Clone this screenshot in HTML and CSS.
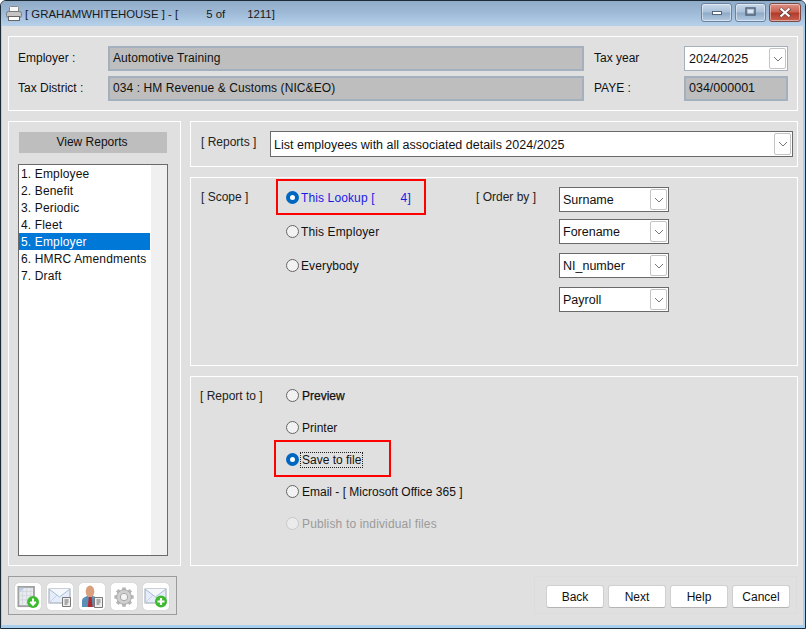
FILE: index.html
```html
<!DOCTYPE html>
<html lang="en">
<head>
<meta charset="utf-8">
<title>GRAHAMWHITEHOUSE</title>
<link rel="stylesheet" href="styles.css">
</head>
<body>
<div class="window">
  <header class="titlebar">
    <svg class="app-icon" width="16" height="16" viewBox="0 0 16 16"><rect x="3.500" y="0.500" width="9" height="6" rx="1" fill="#fafafa" stroke="#8a8a8a"/><rect x="0.500" y="5.500" width="15" height="6" rx="2" fill="#c4c4c4" stroke="#777"/><rect x="2.500" y="10.500" width="11" height="4" fill="#fff" stroke="#666"/></svg>
    <span class="title-text">[ GRAHAMWHITEHOUSE ] - [</span>
    <span class="title-count">5 of</span>
    <span class="title-total">1211]</span>
    <div class="caption">
      <div class="cap-btn"><svg width="12" height="7" viewBox="0 0 12 7"><rect x="1.500" y="2.500" width="9" height="3" fill="#fff" stroke="#56647a"/></svg></div>
      <div class="cap-btn"><svg width="11" height="10" viewBox="0 0 11 10"><rect x="1" y="1" width="9" height="7" fill="none" stroke="#56647a" stroke-width="1.500"/><rect x="3" y="3" width="5" height="3" fill="#dfe8f2"/></svg></div>
      <div class="cap-btn cap-close"><svg width="14" height="11" viewBox="0 0 14 11"><path d="M2 1.500 L12 9.500 M12 1.500 L2 9.500" stroke="#5a3a3a" stroke-width="3.400" fill="none"/><path d="M2.500 1.500 L11.500 9.500 M11.500 1.500 L2.500 9.500" stroke="#fff" stroke-width="2.200" fill="none"/></svg></div>
    </div>
  </header>

  <div class="client">
    <section class="panel top-panel">
      <span class="label">Employer :</span>
      <div class="field">Automotive Training</div>
      <span class="label label-right">Tax year</span>
      <div class="combo combo-soft"><span>2024/2025</span><span class="drop"><svg width="10" height="6" viewBox="0 0 10 6"><path d="M1 1 L5 5 L9 1" fill="none" stroke="#777"/></svg></span></div>
      <span class="label">Tax District :</span>
      <div class="field">034 : HM Revenue &amp; Customs (NIC&amp;EO)</div>
      <span class="label label-right">PAYE :</span>
      <div class="field field-code">034/000001</div>
    </section>

    <div class="main">
      <aside class="panel side">
        <div class="side-head">View Reports</div>
        <div class="listbox">
          <ul class="list">
            <li>1. Employee</li>
            <li>2. Benefit</li>
            <li>3. Periodic</li>
            <li>4. Fleet</li>
            <li class="selected">5. Employer</li>
            <li>6. HMRC Amendments</li>
            <li>7. Draft</li>
          </ul>
          <div class="scrolltrack"></div>
        </div>
      </aside>

      <div class="right">
        <section class="panel reports">
          <span class="group-label">[ Reports ]</span>
          <div class="combo combo-wide"><span>List employees with all associated details 2024/2025</span><span class="drop"><svg width="10" height="6" viewBox="0 0 10 6"><path d="M1 1 L5 5 L9 1" fill="none" stroke="#777"/></svg></span></div>
        </section>

        <section class="panel scope">
          <span class="group-label scope-label">[ Scope ]</span>
          <div class="scope-radios">
            <div class="radio-row highlight highlight-scope"><span class="radio on"></span><span class="blue">This Lookup [</span><span class="blue lookup-count">4]</span></div>
            <div class="radio-row"><span class="radio"></span>This Employer</div>
            <div class="radio-row"><span class="radio"></span>Everybody</div>
          </div>
          <span class="group-label order-label">[ Order by ]</span>
          <div class="order-list">
            <div class="combo combo-order"><span>Surname</span><span class="drop"><svg width="10" height="6" viewBox="0 0 10 6"><path d="M1 1 L5 5 L9 1" fill="none" stroke="#777"/></svg></span></div>
            <div class="combo combo-order"><span>Forename</span><span class="drop"><svg width="10" height="6" viewBox="0 0 10 6"><path d="M1 1 L5 5 L9 1" fill="none" stroke="#777"/></svg></span></div>
            <div class="combo combo-order"><span>NI_number</span><span class="drop"><svg width="10" height="6" viewBox="0 0 10 6"><path d="M1 1 L5 5 L9 1" fill="none" stroke="#777"/></svg></span></div>
            <div class="combo combo-order"><span>Payroll</span><span class="drop"><svg width="10" height="6" viewBox="0 0 10 6"><path d="M1 1 L5 5 L9 1" fill="none" stroke="#777"/></svg></span></div>
          </div>
        </section>

        <section class="panel report-to">
          <span class="group-label report-label">[ Report to ]</span>
          <div class="report-radios">
            <div class="radio-row"><span class="radio"></span><span class="bold-ish">Preview</span></div>
            <div class="radio-row"><span class="radio"></span>Printer</div>
            <div class="radio-row highlight highlight-save"><span class="radio on"></span><span class="focused">Save to file</span></div>
            <div class="radio-row"><span class="radio"></span>Email - [ Microsoft Office 365 ]</div>
            <div class="radio-row disabled"><span class="radio"></span>Publish to individual files</div>
          </div>
        </section>
      </div>
    </div>

    <footer class="bottom">
      <div class="toolbar">
        <div class="tool"><svg width="22" height="22" viewBox="0 0 24 24"><rect x="1.500" y="1" width="17" height="21" fill="#e8ebf0" stroke="#a0a0a0" stroke-width="2"/><path d="M6 2v19M10.500 2v19M15 2v19M2 6h15M2 10.500h15M2 15h15" stroke="#d2d6dc"/><path d="M2.500 2h6l-6 5z" fill="#b9cdea"/><circle cx="17.500" cy="17.500" r="6.500" fill="#3cba2e"/><path d="M17.500 13.500v6.500M14.500 17.200l3 3.200 3-3.200" fill="none" stroke="#fff" stroke-width="2.200"/></svg></div>
        <div class="tool"><svg width="24" height="22" viewBox="0 0 24 22"><rect x="1" y="3" width="21" height="14" fill="#e4edf9" stroke="#9aa4b2"/><path d="M1 3l10.500 8L22 3" fill="#f4f8fd" stroke="#a9bcd6"/><path d="M1 17l8-8" stroke="#c4d2e6"/><path d="M14.500 11.500h8v9h-8z" fill="#eee" stroke="#777"/><path d="M16.500 14h4M16.500 16h4M16.500 18h3" stroke="#666"/></svg></div>
        <div class="tool"><svg width="22" height="24" viewBox="0 0 22 24"><path d="M1 22v-6c0-3 3-4 5-5h6c3 1 4 2 4 5v6z" fill="#5a8fb8"/><ellipse cx="9" cy="6.500" rx="4.300" ry="6" fill="#d9a07e"/><path d="M7.800 12h2.800l1 10h-4.800z" fill="#b3282d"/><path d="M13.500 12.500h8v10h-8z" fill="#eee" stroke="#777"/><path d="M15.500 15h4M15.500 17h4M15.500 19h3" stroke="#666"/></svg></div>
        <div class="tool"><svg width="22" height="22" viewBox="0 0 24 24"><path d="M12 1.500v21M1.500 12h21M4.600 4.600l14.800 14.800M19.400 4.600L4.600 19.400" stroke="#b4b4b4" stroke-width="4"/><circle cx="12" cy="12" r="8" fill="#cfcfcf" stroke="#a8a8a8"/><circle cx="12" cy="12" r="4" fill="#f4f4f4" stroke="#a0a0a0"/></svg></div>
        <div class="tool"><svg width="24" height="22" viewBox="0 0 24 22"><rect x="1" y="3" width="21" height="14" fill="#e4edf9" stroke="#9aa4b2"/><path d="M1 3l10.500 8L22 3" fill="#f4f8fd" stroke="#a9bcd6"/><path d="M1 17l8-8" stroke="#c4d2e6"/><circle cx="17" cy="15.500" r="6" fill="#3cba2e"/><path d="M17 12v7M13.500 15.500h7" stroke="#fff" stroke-width="2.200"/></svg></div>
      </div>
      <div class="actions">
        <button class="btn" type="button">Back</button>
        <button class="btn" type="button">Next</button>
        <button class="btn" type="button">Help</button>
        <button class="btn" type="button">Cancel</button>
      </div>
    </footer>
  </div>
</div>
</body>
</html>
```

FILE: styles.css
```css
*, *::before { box-sizing: border-box; }
html, body { margin: 0; padding: 0; }
body {
  width: 806px;
  height: 629px;
  overflow: hidden;
  background: #fff;
  font-family: "Liberation Sans", Arial, sans-serif;
  font-size: 12px;
  color: #111;
}
.window {
  width: 806px;
  height: 629px;
  display: flex;
  flex-direction: column;
  border: 1px solid #1c2a36;
  border-radius: 6px 6px 0 0;
  background: #a9cfee;
  overflow: hidden;
}
.titlebar {
  height: 25px;
  flex: none;
  display: flex;
  align-items: center;
  padding-left: 5px;
  background: linear-gradient(#8fabc6 0, #9db9d6 45%, #b7d1ea 100%);
  color: #1a1a1a;
  font-size: 11.400px;
}
.app-icon { margin-right: 3px; }
.title-count { margin-left: 28px; }
.title-total { margin-left: 22px; }
.caption {
  margin-left: auto;
  margin-right: 4px;
  margin-top: -3px;
  display: flex;
  gap: 3px;
}
.cap-btn {
  width: 31px;
  height: 19px;
  display: flex;
  align-items: center;
  justify-content: center;
  border: 1px solid #6b82a0;
  border-radius: 3px;
  background: linear-gradient(#c8d8ea 0, #a9c0d8 48%, #8ea9c6 52%, #b4cbe2 100%);
  box-shadow: inset 0 0 0 1px rgba(255,255,255,.45);
}
.cap-close {
  width: 32px;
  border-color: #7a4a46;
  background: linear-gradient(#dc9286 0, #c9604f 48%, #b13a2a 52%, #c8604f 100%);
}
.client {
  flex: 1;
  min-height: 0;
  margin: 0 2px 3px 1px;
  padding: 10px 6px 0 6px;
  background: #e0e0e0;
  display: flex;
  flex-direction: column;
}
.panel {
  border: 1px solid #fff;
  background: #e0e0e0;
}
.top-panel {
  height: 75px;
  width: 790px;
  display: grid;
  grid-template-columns: 90px 476px 100px 104px;
  grid-template-rows: 25px 25px;
  row-gap: 5px;
  padding: 9px 0 0 9px;
  align-items: center;
}
.label { line-height: 25px; }
.label-right { padding-left: 10px; }
.field {
  height: 25px;
  line-height: 21px;
  padding-left: 3px;
  background: #bebebe;
  border: 2px solid #a5b0bf;
  letter-spacing: .08px;
}
.field-code { font-size: 12.500px; letter-spacing: 0; }
.main {
  margin-top: 10px;
  height: 445px;
  display: flex;
  gap: 9px;
}
.side {
  width: 173px;
  flex: none;
  padding: 10px 10px 9px 9px;
  display: flex;
  flex-direction: column;
}
.side-head {
  margin-left: 1px;
  width: 148px;
  height: 21px;
  line-height: 20px;
  text-align: center;
  background: #bebebe;
  padding-right: 2px;
}
.listbox {
  margin-top: 11px;
  flex: 1;
  width: 150px;
  border: 1px solid #6a6a6a;
  background: #fff;
  display: flex;
}
.list {
  list-style: none;
  margin: 0;
  padding: 0;
  width: 131px;
  flex: none;
}
.list li {
  height: 17px;
  line-height: 18px;
  padding-left: 2px;
  white-space: nowrap;
  letter-spacing: .15px;
}
.list .selected { background: #0078d7; color: #fff; }
.scrolltrack {
  flex: 1;
  margin-left: 1px;
  background: #f0f0f0;
}
.right {
  width: 608px;
  flex: none;
  display: flex;
  flex-direction: column;
  gap: 10px;
}
.reports {
  height: 46px;
  display: flex;
  padding: 9px 4px 0 10px;
  align-items: flex-start;
}
.group-label { color: #222; white-space: nowrap; }
.reports .group-label { width: 69px; line-height: 23px; }
.combo {
  display: flex;
  align-items: center;
  justify-content: space-between;
  background: #fff;
  border: 1px solid #6a6a6a;
  padding: 0 1px 0 3px;
  font-size: 12.500px;
}
.combo-wide { width: 523px; height: 26px; }
.combo-wide > span:first-child { padding-top: 1px; }
.combo-order { width: 110px; height: 25px; }
.combo-soft {
  height: 25px;
  border: 1px solid #a5b0bf;
  padding: 0 1px 0 4px;
}
.drop {
  width: 17px;
  height: 21px;
  display: flex;
  align-items: center;
  justify-content: center;
  background: #fff;
  border: 1px solid #c4c4c4;
  border-radius: 2px;
}
.combo-wide .drop { height: 22px; }
.scope {
  height: 189px;
  display: flex;
  align-items: flex-start;
}
.scope-label { margin: 12px 0 0 10px; width: 85px; }
.scope-radios {
  width: 190px;
  padding-top: 2px;
  display: flex;
  flex-direction: column;
  letter-spacing: .12px;
}
.scope-radios .radio-row { height: 34px; }
.scope-radios .radio { margin-right: 2px; }
.order-label { margin: 12px 0 0 0; width: 83px; }
.order-list {
  margin-top: 9px;
  display: flex;
  flex-direction: column;
  gap: 9px;
}
.order-list .combo:first-child { margin-bottom: -2px; }
.radio-row {
  display: flex;
  align-items: center;
  position: relative;
  white-space: nowrap;
  padding-top: 1px;
}
.radio {
  width: 13px;
  height: 13px;
  flex: none;
  margin-right: 3px;
  margin-top: -1px;
  border-radius: 50%;
  border: 1px solid #666;
  background: #f2f2f2;
}
.radio.on {
  border: 4px solid #0067c0;
  background: #fff;
}
.blue { color: #1a1ae6; }
.highlight-scope .blue:first-of-type { letter-spacing: .2px; }
.lookup-count { margin-left: 26px; }
.highlight::before {
  content: "";
  position: absolute;
  border: 2px solid #f00;
  pointer-events: none;
}
.highlight-scope::before { left: -10px; top: -1px; width: 150px; height: 36px; }
.highlight-save::before { left: -12px; top: -3px; width: 117px; height: 37px; }
.report-to {
  height: 190px;
  display: flex;
  align-items: flex-start;
}
.report-label { margin: 12px 0 0 9px; width: 86px; }
.report-radios {
  padding-top: 2px;
  display: flex;
  flex-direction: column;
}
.report-radios .radio-row { height: 32px; }
.bold-ish { -webkit-text-stroke: 0.250px #111; }
.focused { outline: 1px dotted #222; padding: 0 1px; margin-left: -1px; }
.disabled { color: #9a9a9a; letter-spacing: .15px; }
.disabled .radio { border-color: #c8c8c8; background: #ebebeb; }
.bottom {
  margin-top: 10px;
  display: flex;
  justify-content: space-between;
  align-items: flex-start;
}
.toolbar {
  width: 169px;
  height: 39px;
  display: flex;
  gap: 6px;
  padding: 6px 6px;
  border: 1px solid #9c9c9c;
}
.tool {
  width: 26px;
  height: 27px;
  flex: none;
  display: flex;
  align-items: center;
  justify-content: center;
  background: #fff;
  border-radius: 4px;
  box-shadow: 0 0 1px #aaa;
}
.actions {
  width: 263px;
  height: 38px;
  display: flex;
  gap: 4px;
  padding: 8px 6px 0 11px;
  border: 1px solid #dcdcdc;
}
.btn {
  width: 58px;
  height: 23px;
  flex: none;
  padding: 0;
  font: inherit;
  color: #111;
  background: #fff;
  border: 1px solid #d0d0d0;
  border-bottom-color: #b4b4b4;
  border-radius: 3px;
}
```
